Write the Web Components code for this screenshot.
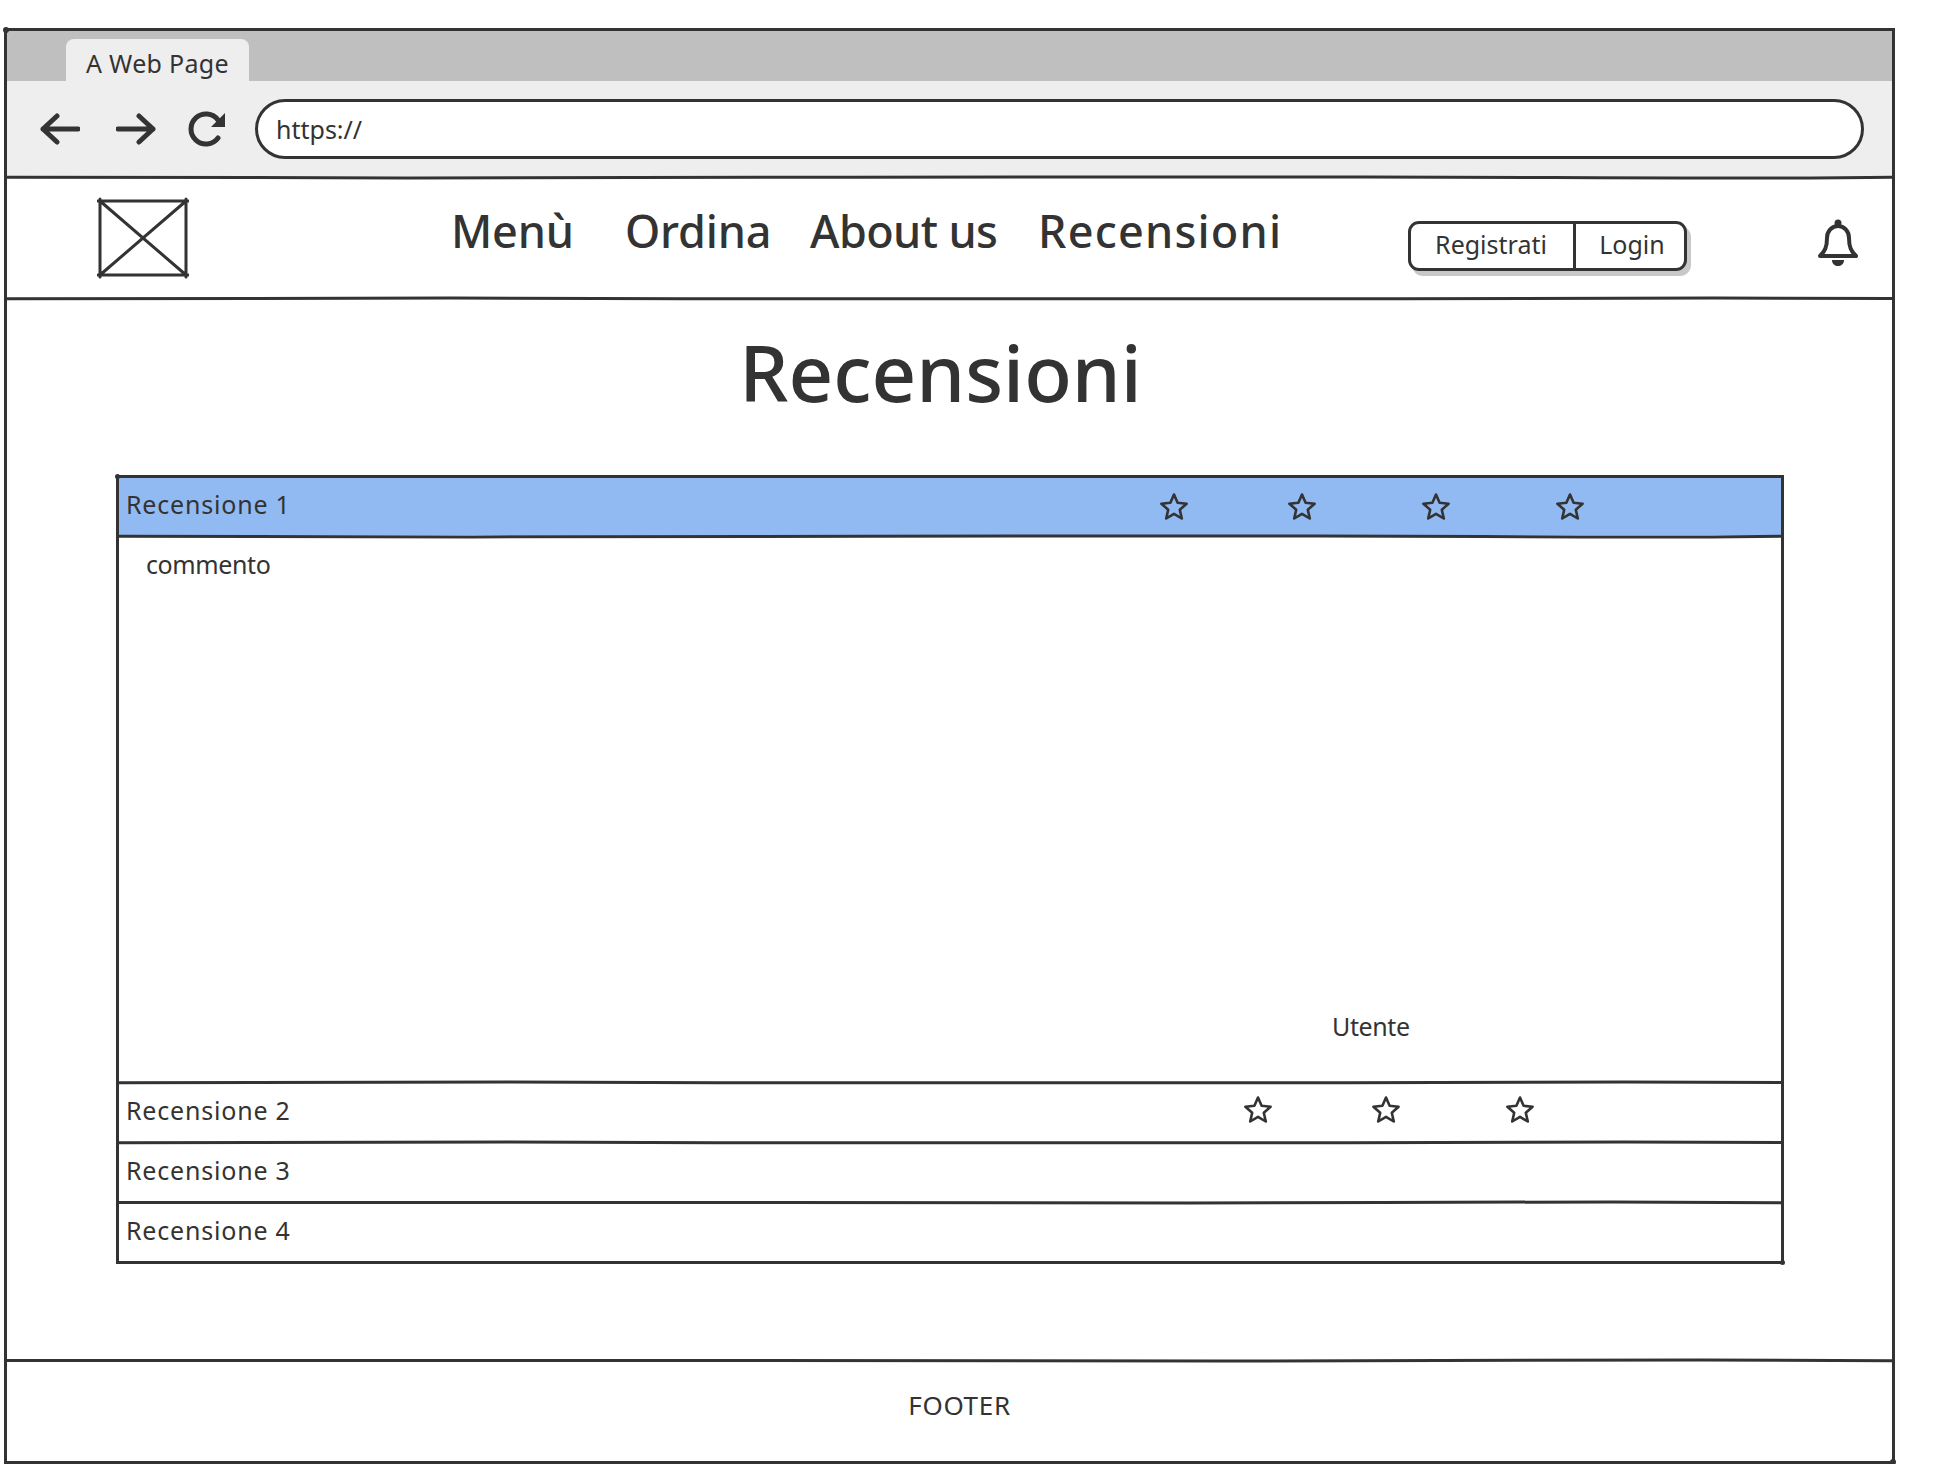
<!DOCTYPE html>
<html lang="it">
<head>
<meta charset="utf-8">
<title>Recensioni</title>
<style>
    html, body { margin: 0; padding: 0; background: #fff; }
    body { font-family: "Noto Sans", "Lato", sans-serif; color: #333; }
</style>
</head>
<body>
<wire-window>
    <browser-chrome url="https://" tab="A Web Page"></browser-chrome>
    <sketch-line shape="1"></sketch-line>
    <site-nav></site-nav>
    <sketch-line shape="2"></sketch-line>
    <page-title>Recensioni</page-title>
    <review-table>
        <review-row label="Recensione 1" open stars="4" first-star="1190">
            <span slot="comment">commento</span>
            <span slot="author">Utente</span>
        </review-row>
        <review-row label="Recensione 2" stars="3" first-star="1274"></review-row>
        <review-row label="Recensione 3"></review-row>
        <review-row label="Recensione 4" last></review-row>
    </review-table>
    <site-footer>FOOTER</site-footer>
</wire-window>

<script>
// slightly uneven horizontal rule, the mockup has no perfectly straight lines
const LINE_SHAPES = [
    'M0 1.5C120 .8 260 .6 400 1.500S640 2.400 760 1.400 900 1 1000 1.700',
    'M0 1.200C150 2.200 300 2 450 1.200S700 .6 820 1.600 940 2 1000 1.300',
    'M0 1.800C100 1 240 .7 360 1.700S600 2.600 740 1.800 900 .8 1000 1.400'
];

class SketchLine extends HTMLElement {
    constructor() {
        super();
        this.attachShadow({ mode: 'open' });
    }

    connectedCallback() {
        const shape = LINE_SHAPES[Number(this.getAttribute('shape') || 0) % LINE_SHAPES.length];
        this.shadowRoot.innerHTML = `
            <style>
                :host { display: block; height: 3px; }
                svg { display: block; width: 100%; height: 3px; overflow: visible; }
                path { fill: none; stroke: #333; stroke-width: 3px; vector-effect: non-scaling-stroke; }
            </style>
            <svg viewBox="0 0 1000 3" preserveAspectRatio="none"><path d="${shape}"/></svg>
        `;
    }
}

class WireWindow extends HTMLElement {
    constructor() {
        super();
        this.attachShadow({ mode: 'open' });
        this.shadowRoot.innerHTML = `
            <style>
                :host {
                    display: flex;
                    flex-direction: column;
                    box-sizing: border-box;
                    width: 1891px;
                    height: 1436px;
                    margin: 28px 0 0 4px;
                    border: 3px solid #333;
                    position: relative;
                }
                :host::before, :host::after {
                    content: "";
                    position: absolute;
                    width: 6px;
                    height: 6px;
                    border-radius: 50%;
                    background: #333;
                }
                :host::before { left: -4px; top: -4px; }
                :host::after { right: -4px; bottom: -4px; }
            </style>
            <slot></slot>
        `;
    }
}

class BrowserChrome extends HTMLElement {
    constructor() {
        super();
        this.attachShadow({ mode: 'open' });
    }

    connectedCallback() {
        this.shadowRoot.innerHTML = `
            <style>
                :host { display: block; }
                .strip { height: 50px; background: #bfbfbf; padding-left: 59px; display: flex; align-items: flex-end; }
                .tab {
                    height: 42px;
                    width: 183px;
                    box-sizing: border-box;
                    background: #eee;
                    border-radius: 8px 8px 0 0;
                    font-size: 25px;
                    letter-spacing: .3px;
                    line-height: 48px;
                    padding-left: 20px;
                    white-space: nowrap;
                }
                .bar {
                    height: 95px;
                    background: #eee;
                    display: flex;
                    align-items: center;
                    padding: 0 28px 0 33px;
                }
                svg { display: block; flex: none; }
                .fwd { margin-left: 36px; }
                .reload { margin-left: 32px; }
                .url {
                    margin-left: 29px;
                    flex: 1;
                    height: 60px;
                    box-sizing: border-box;
                    border: 3px solid #333;
                    border-radius: 30px;
                    background: #fff;
                    font-size: 25px;
                    line-height: 54px;
                    padding-left: 18px;
                }
            </style>
            <div class="strip"><div class="tab">${this.getAttribute('tab')}</div></div>
            <div class="bar">
                <svg width="40" height="32" viewBox="0 0 40 32" fill="none" stroke="#333" stroke-width="5" stroke-linecap="round" stroke-linejoin="round"><path d="M38 16H3M17 3L3 16l14 13"/></svg>
                <svg class="fwd" width="40" height="32" viewBox="0 0 40 32" fill="none" stroke="#333" stroke-width="5" stroke-linecap="round" stroke-linejoin="round"><path d="M2 16h35M23 3l14 13-14 13"/></svg>
                <svg class="reload" width="38" height="36" viewBox="0 0 38 36"><path d="M30 27A15 15 0 1 1 30 9" fill="none" stroke="#333" stroke-width="5" stroke-linecap="round"/><path d="M37 2v14H23z" fill="#333"/></svg>
                <div class="url">${this.getAttribute('url')}</div>
            </div>
        `;
    }
}

class SiteNav extends HTMLElement {
    constructor() {
        super();
        this.attachShadow({ mode: 'open' });
        this.shadowRoot.innerHTML = `
            <style>
                :host {
                    display: flex;
                    align-items: center;
                    height: 118px;
                    padding-left: 90px;
                    font-size: 45px;
                }
                svg { display: block; flex: none; }
                nav { display: flex; margin-left: 262px; position: relative; top: -8px; white-space: nowrap; font-weight: 500; }
                nav span:nth-child(1) { width: 174px; letter-spacing: -.2px; }
                nav span:nth-child(2) { width: 185px; letter-spacing: -.2px; }
                nav span:nth-child(3) { width: 228px; letter-spacing: -.6px; }
                nav span:nth-child(4) { width: 250px; letter-spacing: 1.200px; }
                .group {
                    margin-left: 120px;
                    display: flex;
                    width: 279px;
                    height: 50px;
                    box-sizing: border-box;
                    border: 3px solid #333;
                    border-radius: 11px;
                    box-shadow: 4px 5px 0 #c8c8c8;
                    font-size: 25px;
                    line-height: 41px;
                    background: #fff;
                    position: relative;
                    top: 8px;
                }
                .group span { text-align: center; }
                .reg { width: 160px; padding-right: 2px; border-right: 3px solid #333; }
                .log { flex: 1; padding-left: 4px; }
                .bell { margin-left: 130px; position: relative; top: 5px; }
            </style>
            <svg width="92" height="82" viewBox="0 0 92 82" fill="none" stroke="#333" stroke-width="3" stroke-linecap="round">
                <path d="M1 4h90M3 2v78M89 2v78M1 78h90M3 4l86 74M89 4L3 78"/>
            </svg>
            <nav>
                <span>Menù</span><span>Ordina</span><span>About us</span><span>Recensioni</span>
            </nav>
            <div class="group"><span class="reg">Registrati</span><span class="log">Login</span></div>
            <svg class="bell" width="42" height="50" viewBox="0 0 42 50">
                <path d="M3 38c5-5 7-9 7-18 0-7 5-12 11-12s11 5 11 12c0 9 2 13 7 18z" fill="none" stroke="#333" stroke-width="4" stroke-linejoin="round"/>
                <circle cx="21" cy="5" r="3.500" fill="#333"/>
                <path d="M15 42h12c0 4-3 6-6 6s-6-2-6-6z" fill="#333"/>
            </svg>
        `;
    }
}

class PageTitle extends HTMLElement {
    constructor() {
        super();
        this.attachShadow({ mode: 'open' });
        this.shadowRoot.innerHTML = `
            <style>
                :host {
                    display: block;
                    height: 175px;
                    box-sizing: border-box;
                    padding: 17px 18px 0 0;
                    text-align: center;
                    font-size: 78px;
                    font-weight: 500;
                    line-height: 110px;
                }
            </style>
            <slot></slot>
        `;
    }
}

class ReviewTable extends HTMLElement {
    constructor() {
        super();
        this.attachShadow({ mode: 'open' });
        this.shadowRoot.innerHTML = `
            <style>
                :host {
                    display: block;
                    width: 1668px;
                    box-sizing: border-box;
                    margin-left: 109px;
                    border: 3px solid #333;
                    position: relative;
                }
                :host::before, :host::after {
                    content: "";
                    position: absolute;
                    width: 5px;
                    height: 5px;
                    border-radius: 50%;
                    background: #333;
                }
                :host::before { left: -4px; top: -4px; }
                :host::after { right: -4px; bottom: -4px; }
            </style>
            <slot></slot>
        `;
    }
}

class ReviewRow extends HTMLElement {
    constructor() {
        super();
        this.attachShadow({ mode: 'open' });
    }

    connectedCallback() {
        const open = this.hasAttribute('open');
        const count = Number(this.getAttribute('stars') || 0);
        const gaps = [98, 104, 104];
        let stars = '';
        for (let i = 0; i < count; i++) {
            const left = i === 0 ? Number(this.getAttribute('first-star')) - 127 - 30 : gaps[i - 1];
            stars += `<svg style="margin-left:${left}px" width="30" height="30" viewBox="0 0 30 30" fill="none" stroke="#333" stroke-width="2.6" stroke-linejoin="round"><path d="M15 2.500l3.600 8.300 9 .9-6.800 6 2 8.800L15 21.800l-7.800 4.700 2-8.800-6.800-6 9-.9z"/></svg>`;
        }
        this.shadowRoot.innerHTML = `
            <style>
                :host { display: block; }
                .head {
                    height: 57px;
                    display: flex;
                    align-items: center;
                    padding-left: 7px;
                    font-size: 25px;
                    letter-spacing: .8px;
                    background: ${open ? '#92baf2' : '#fff'};
                }
                .label { flex: none; width: 0; white-space: nowrap; position: relative; top: -3px; }
                svg { display: block; flex: none; margin-top: ${open ? '0' : '-6px'}; }
                .body {
                    height: 543px;
                    box-sizing: border-box;
                    font-size: 25px;
                    letter-spacing: -.4px;
                    display: flex;
                    flex-direction: column;
                    justify-content: space-between;
                    padding: 9px 0 38px 27px;
                }
                .author { margin-left: 1186px; }
            </style>
            <div class="head"><span class="label">${this.getAttribute('label')}</span>${stars}</div>
            ${this.hasAttribute('last') ? '' : '<sketch-line shape="' + this.getAttribute('label').slice(-1) + '"></sketch-line>'}
            ${open ? '<div class="body"><div><slot name="comment"></slot></div><div class="author"><slot name="author"></slot></div></div><sketch-line shape="2"></sketch-line>' : ''}
        `;
    }
}

class SiteFooter extends HTMLElement {
    constructor() {
        super();
        this.attachShadow({ mode: 'open' });
        this.shadowRoot.innerHTML = `
            <style>
                :host {
                    display: block;
                    margin-top: auto;
                }
                .box {
                    display: flex;
                    align-items: center;
                    justify-content: center;
                    height: 99px;
                    font-size: 26px;
                    letter-spacing: .7px;
                    padding-left: 20px;
                }
                div div { position: relative; top: -7px; }
            </style>
            <sketch-line shape="0"></sketch-line>
            <div class="box"><div><slot></slot></div></div>
        `;
    }
}

customElements.define('sketch-line', SketchLine);
customElements.define('wire-window', WireWindow);
customElements.define('browser-chrome', BrowserChrome);
customElements.define('site-nav', SiteNav);
customElements.define('page-title', PageTitle);
customElements.define('review-table', ReviewTable);
customElements.define('review-row', ReviewRow);
customElements.define('site-footer', SiteFooter);
</script>
</body>
</html>
